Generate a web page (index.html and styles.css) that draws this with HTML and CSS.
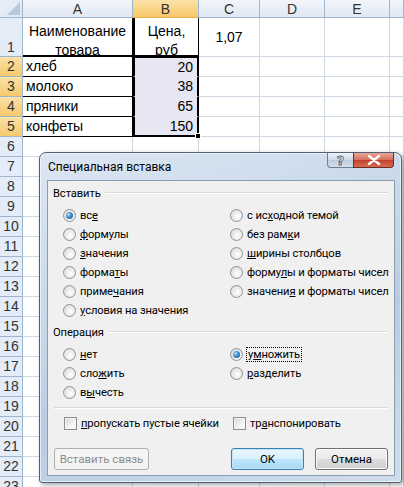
FILE: index.html
```html
<!DOCTYPE html>
<html lang="ru">
  <head>
    <meta charset="UTF-8" />
    <title>Специальная вставка</title>
    <link rel="stylesheet" href="styles.css">
  </head>
  <body>
    <div class="sheet">
      <div class="corner"></div>
      <div class="ch">A</div><div class="ch ch-on">B</div><div class="ch">C</div><div class="ch">D</div><div class="ch">E</div><div class="ch"></div>

      <div class="rh rh-1">1</div>
      <div class="c t t1 wrap">Наименование товара</div>
      <div class="c t t1 tb wrap">Цена, руб</div>
      <div class="c mid">1,07</div><div class="c"></div><div class="c"></div><div class="c"></div>

      <div class="rh on">2</div><div class="c t">хлеб</div><div class="c sel sel-top num">20</div><div class="c"></div><div class="c"></div><div class="c"></div><div class="c"></div>
      <div class="rh on">3</div><div class="c t">молоко</div><div class="c sel num">38</div><div class="c"></div><div class="c"></div><div class="c"></div><div class="c"></div>
      <div class="rh on">4</div><div class="c t">пряники</div><div class="c sel num">65</div><div class="c"></div><div class="c"></div><div class="c"></div><div class="c"></div>
      <div class="rh on">5</div><div class="c t">конфеты</div><div class="c sel sel-bot num">150</div><div class="c"></div><div class="c"></div><div class="c"></div><div class="c"></div>

      <div class="rh">6</div><div class="c"></div><div class="c"></div><div class="c"></div><div class="c"></div><div class="c"></div><div class="c"></div>
      <div class="rh">7</div><div class="c"></div><div class="c"></div><div class="c"></div><div class="c"></div><div class="c"></div><div class="c"></div>
      <div class="rh">8</div><div class="c"></div><div class="c"></div><div class="c"></div><div class="c"></div><div class="c"></div><div class="c"></div>
      <div class="rh">9</div><div class="c"></div><div class="c"></div><div class="c"></div><div class="c"></div><div class="c"></div><div class="c"></div>
      <div class="rh">10</div><div class="c"></div><div class="c"></div><div class="c"></div><div class="c"></div><div class="c"></div><div class="c"></div>
      <div class="rh">11</div><div class="c"></div><div class="c"></div><div class="c"></div><div class="c"></div><div class="c"></div><div class="c"></div>
      <div class="rh">12</div><div class="c"></div><div class="c"></div><div class="c"></div><div class="c"></div><div class="c"></div><div class="c"></div>
      <div class="rh">13</div><div class="c"></div><div class="c"></div><div class="c"></div><div class="c"></div><div class="c"></div><div class="c"></div>
      <div class="rh">14</div><div class="c"></div><div class="c"></div><div class="c"></div><div class="c"></div><div class="c"></div><div class="c"></div>
      <div class="rh">15</div><div class="c"></div><div class="c"></div><div class="c"></div><div class="c"></div><div class="c"></div><div class="c"></div>
      <div class="rh">16</div><div class="c"></div><div class="c"></div><div class="c"></div><div class="c"></div><div class="c"></div><div class="c"></div>
      <div class="rh">17</div><div class="c"></div><div class="c"></div><div class="c"></div><div class="c"></div><div class="c"></div><div class="c"></div>
      <div class="rh">18</div><div class="c"></div><div class="c"></div><div class="c"></div><div class="c"></div><div class="c"></div><div class="c"></div>
      <div class="rh">19</div><div class="c"></div><div class="c"></div><div class="c"></div><div class="c"></div><div class="c"></div><div class="c"></div>
      <div class="rh">20</div><div class="c"></div><div class="c"></div><div class="c"></div><div class="c"></div><div class="c"></div><div class="c"></div>
      <div class="rh">21</div><div class="c"></div><div class="c"></div><div class="c"></div><div class="c"></div><div class="c"></div><div class="c"></div>
      <div class="rh">22</div><div class="c"></div><div class="c"></div><div class="c"></div><div class="c"></div><div class="c"></div><div class="c"></div>
      <div class="rh">23</div><div class="c"></div><div class="c"></div><div class="c"></div><div class="c"></div><div class="c"></div><div class="c"></div>
    </div>

    <div class="dlg">
      <div class="dlg-title">
        <span class="dlg-caption">Специальная вставка</span>
        <span class="tbtn tbtn-help">?</span>
        <span class="tbtn tbtn-close">
          <svg width="14" height="10" viewBox="0 0 14 10"><path d="M2 1 L12 9 M12 1 L2 9" stroke="#fff" stroke-width="2.4" stroke-linecap="round"/></svg>
        </span>
      </div>
      <div class="dlg-body">
        <div class="grp"><span>Вставить</span><i></i></div>
        <div class="opts opts-paste">
          <label class="opt"><span class="rb on"></span><span>вс<u>е</u></span></label>
          <label class="opt"><span class="rb"></span><span><u>ф</u>ормулы</span></label>
          <label class="opt"><span class="rb"></span><span><u>з</u>начения</span></label>
          <label class="opt"><span class="rb"></span><span>форма<u>т</u>ы</span></label>
          <label class="opt"><span class="rb"></span><span>приме<u>ч</u>ания</span></label>
          <label class="opt"><span class="rb"></span><span><u>у</u>словия на значения</span></label>
          <label class="opt"><span class="rb"></span><span>с ис<u>х</u>одной темой</span></label>
          <label class="opt"><span class="rb"></span><span>без рам<u>к</u>и</span></label>
          <label class="opt"><span class="rb"></span><span><u>ш</u>ирины столбцов</span></label>
          <label class="opt"><span class="rb"></span><span>форму<u>л</u>ы и форматы чисел</span></label>
          <label class="opt"><span class="rb"></span><span>значени<u>я</u> и форматы чисел</span></label>
        </div>

        <div class="grp"><span>Операция</span><i></i></div>
        <div class="opts opts-op">
          <label class="opt"><span class="rb"></span><span><u>н</u>ет</span></label>
          <label class="opt"><span class="rb"></span><span>сло<u>ж</u>ить</span></label>
          <label class="opt"><span class="rb"></span><span>в<u>ы</u>честь</span></label>
          <label class="opt"><span class="rb on"></span><span class="focus">у<u>м</u>ножить</span></label>
          <label class="opt"><span class="rb"></span><span><u>р</u>азделить</span></label>
        </div>

        <div class="sep"></div>

        <div class="checks">
          <label class="opt"><span class="cb"></span><span><u>п</u>ропускать пустые ячейки</span></label>
          <label class="opt"><span class="cb"></span><span>тр<u>а</u>нспонировать</span></label>
        </div>

        <div class="btns">
          <button class="btn btn-link" disabled>Вставить связь</button>
          <span class="spacer"></span>
          <button class="btn btn-ok">OK</button>
          <button class="btn">Отмена</button>
        </div>
      </div>
    </div>
  </body>
</html>
```

FILE: styles.css
```css
body {
  margin: 0;
  position: relative;
  width: 404px;
  height: 487px;
  overflow: hidden;
  background: #fff;
  font-family: "Liberation Sans", Arial, sans-serif;
}

/* spreadsheet */
.sheet {
  display: grid;
  grid-template-columns: 23px 110px 66px 61px 65px 65px 1fr;
  grid-template-rows: 18px 39px;
  grid-auto-rows: 20px;
  font-size: 14px;
  color: #000;
}
.sheet > div {
  box-sizing: border-box;
  border-right: 1px solid #d0d7e5;
  border-bottom: 1px solid #d0d7e5;
  overflow: hidden;
  white-space: nowrap;
}
.corner {
  background: linear-gradient(135deg, #e9eff8 0, #dfe7f3 100%);
  position: relative;
  border-color: #9eb6ce !important;
}
.corner::after {
  content: "";
  position: absolute;
  right: 2px;
  bottom: 2px;
  border-left: 13px solid transparent;
  border-bottom: 13px solid #b7c9dd;
}
.ch {
  background: linear-gradient(#f2f5fa, #e1e8f2);
  border-color: #9eb6ce !important;
  text-align: center;
  line-height: 18px;
  color: #333;
}
.ch-on {
  background: linear-gradient(#fbe2a8, #f6c86a);
  border-bottom-color: #f2a93d !important;
}
.rh {
  background: #e4ecf7;
  border-color: #9eb6ce !important;
  text-align: center;
  line-height: 19px;
  color: #333;
}
.rh-1 {
  line-height: 1;
  display: flex;
  align-items: flex-end;
  justify-content: center;
  padding-bottom: 2px;
}
.rh.on {
  background: linear-gradient(#fbe2a8, #f6c86a);
}
.c {
  line-height: 19px;
}
.t {
  border-right-color: #000 !important;
  border-bottom-color: #000 !important;
  padding-left: 3px;
}
.t1 {
  border-bottom-width: 2px !important;
}
.tb {
  border-left: 2px solid #000;
}
.wrap {
  white-space: normal !important;
  text-align: center;
  line-height: 19px;
  padding: 4px 0 0;
}
.mid {
  text-align: center;
  line-height: 38px;
}
.num {
  text-align: right;
  padding-right: 4px;
}
.sel {
  background: #e6e7f3;
  border-left: 2px solid #000;
  border-right: 2px solid #000 !important;
  border-bottom-color: #e6e7f3 !important;
}
.sel-top {
  border-top: 1px solid #000;
}
.sel-bot {
  border-bottom: 2px solid #000 !important;
  position: relative;
  overflow: visible !important;
}
.sel-bot::after {
  content: "";
  position: absolute;
  right: -4px;
  bottom: -4px;
  width: 4px;
  height: 4px;
  background: #000;
  border: 1px solid #fff;
}

/* dialog */
.dlg {
  position: absolute;
  left: 39px;
  top: 152px;
  width: 363px;
  height: 331px;
  box-sizing: border-box;
  border: 1px solid #4e6076;
  border-radius: 7px 7px 3px 3px;
  background: linear-gradient(160deg, #dbe6f2 0, #c4d5e8 45%, #b9cce2 60%, #cfdced 100%);
  box-shadow: inset 0 0 0 1px rgba(255, 255, 255, 0.6), 2px 2px 5px rgba(0, 0, 0, 0.35);
  padding: 0 6px 6px 7px;
  display: flex;
  flex-direction: column;
  font-family: Roboto, "Noto Sans", sans-serif;
  font-size: 11.2px;
  letter-spacing: -0.1px;
  color: #000;
}
.dlg-title {
  height: 27px;
  display: flex;
  align-items: flex-start;
  flex-shrink: 0;
}
.dlg-caption {
  flex: 1;
  padding-left: 1px;
  line-height: 28px;
  font-size: 12px;
  letter-spacing: 0;
}
.tbtn {
  height: 15px;
  box-sizing: border-box;
  border: 1px solid #6d7f96;
  border-top: none;
  display: flex;
  align-items: center;
  justify-content: center;
}
.tbtn-help {
  width: 26px;
  border-radius: 0 0 0 4px;
  border-right: none;
  background: linear-gradient(#eef3f9, #cdd9e7 50%, #bccbdc 51%, #d4dfeb);
  color: #eef2f7;
  font-family: "DejaVu Sans", sans-serif;
  font-weight: bold;
  font-size: 13px;
  line-height: 15px;
  -webkit-text-stroke: 0.8px #50627a;
}
.tbtn-close {
  width: 41px;
  margin-right: 1px;
  border-radius: 0 0 4px 0;
  border-color: #6e2b23;
  background: linear-gradient(#eaa597, #d6705c 48%, #c2422c 52%, #d66a50);
}
.dlg-body {
  flex: 1;
  background: #f0f0f0;
  border: 1px solid #8c9cb0;
  padding: 0 6px 0 5px;
  display: flex;
  flex-direction: column;
}
.grp {
  display: flex;
  align-items: center;
  height: 18px;
  margin-top: 3px;
  gap: 4px;
}
.grp i {
  flex: 1;
  border-top: 1px solid #d9d9d9;
  border-bottom: 1px solid #fff;
}
.opts {
  display: grid;
  grid-template-columns: 167px 1fr;
  grid-template-rows: repeat(6, 19px);
  grid-auto-flow: column;
  padding-left: 10px;
  margin-top: 4px;
}
.opts-op {
  grid-template-rows: repeat(3, 19px);
}
.opts-paste + .grp {
  margin-top: 3px;
}
.opt {
  display: flex;
  align-items: center;
  gap: 4px;
  white-space: nowrap;
}
.rb {
  width: 13px;
  height: 13px;
  box-sizing: border-box;
  border-radius: 50%;
  border: 1px solid #929292;
  background: radial-gradient(circle at 60% 60%, #fff 0, #f0f0f0 35%, #d2d2d2 100%);
  display: flex;
  align-items: center;
  justify-content: center;
  flex-shrink: 0;
}
.rb.on::after {
  content: "";
  width: 7px;
  height: 7px;
  border-radius: 50%;
  background: radial-gradient(circle at 35% 35%, #b6e0fb 0, #3d8ccc 45%, #1b4f80 100%);
}
.focus {
  outline: 1px dotted #000;
  outline-offset: 0;
  padding: 0 1px;
}
.sep {
  margin: 5px 0 0 1px;
  border-top: 1px solid #d9d9d9;
  border-bottom: 1px solid #fff;
}
.checks {
  display: grid;
  grid-template-columns: 169px 1fr;
  padding-left: 11px;
  margin-top: 5px;
  height: 19px;
}
.cb {
  width: 13px;
  height: 13px;
  box-sizing: border-box;
  border: 1px solid #8f8f8f;
  background: linear-gradient(135deg, #d4d4d4 0, #f4f4f4 60%, #fff 100%);
  box-shadow: inset 0 0 0 1px #f4f4f4;
  flex-shrink: 0;
}
.btns {
  display: flex;
  gap: 11px;
  margin-top: 15px;
  padding-left: 1px;
}
.spacer {
  flex: 1;
}
.btn {
  height: 22px;
  box-sizing: border-box;
  font-family: Roboto, "Noto Sans", sans-serif;
  font-size: 11.5px;
  color: #000;
  border: 1px solid #707070;
  border-radius: 3px;
  background: linear-gradient(#f2f2f2 0, #ebebeb 48%, #dddddd 52%, #cfcfcf 100%);
  box-shadow: inset 0 0 0 1px #fcfcfc;
  width: 73px;
  padding: 0;
}
.btn-ok {
  border-color: #3c7fb1;
  background: linear-gradient(#eaf6fd 0, #d9f0fc 48%, #bee6fd 52%, #a7d9f5 100%);
  box-shadow: inset 0 0 0 1px #c4e5f6;
}
.btn-link {
  width: 95px;
  color: #8d8d8d;
  border-color: #adb2b5;
  background: #f4f4f4;
  box-shadow: none;
}
```
